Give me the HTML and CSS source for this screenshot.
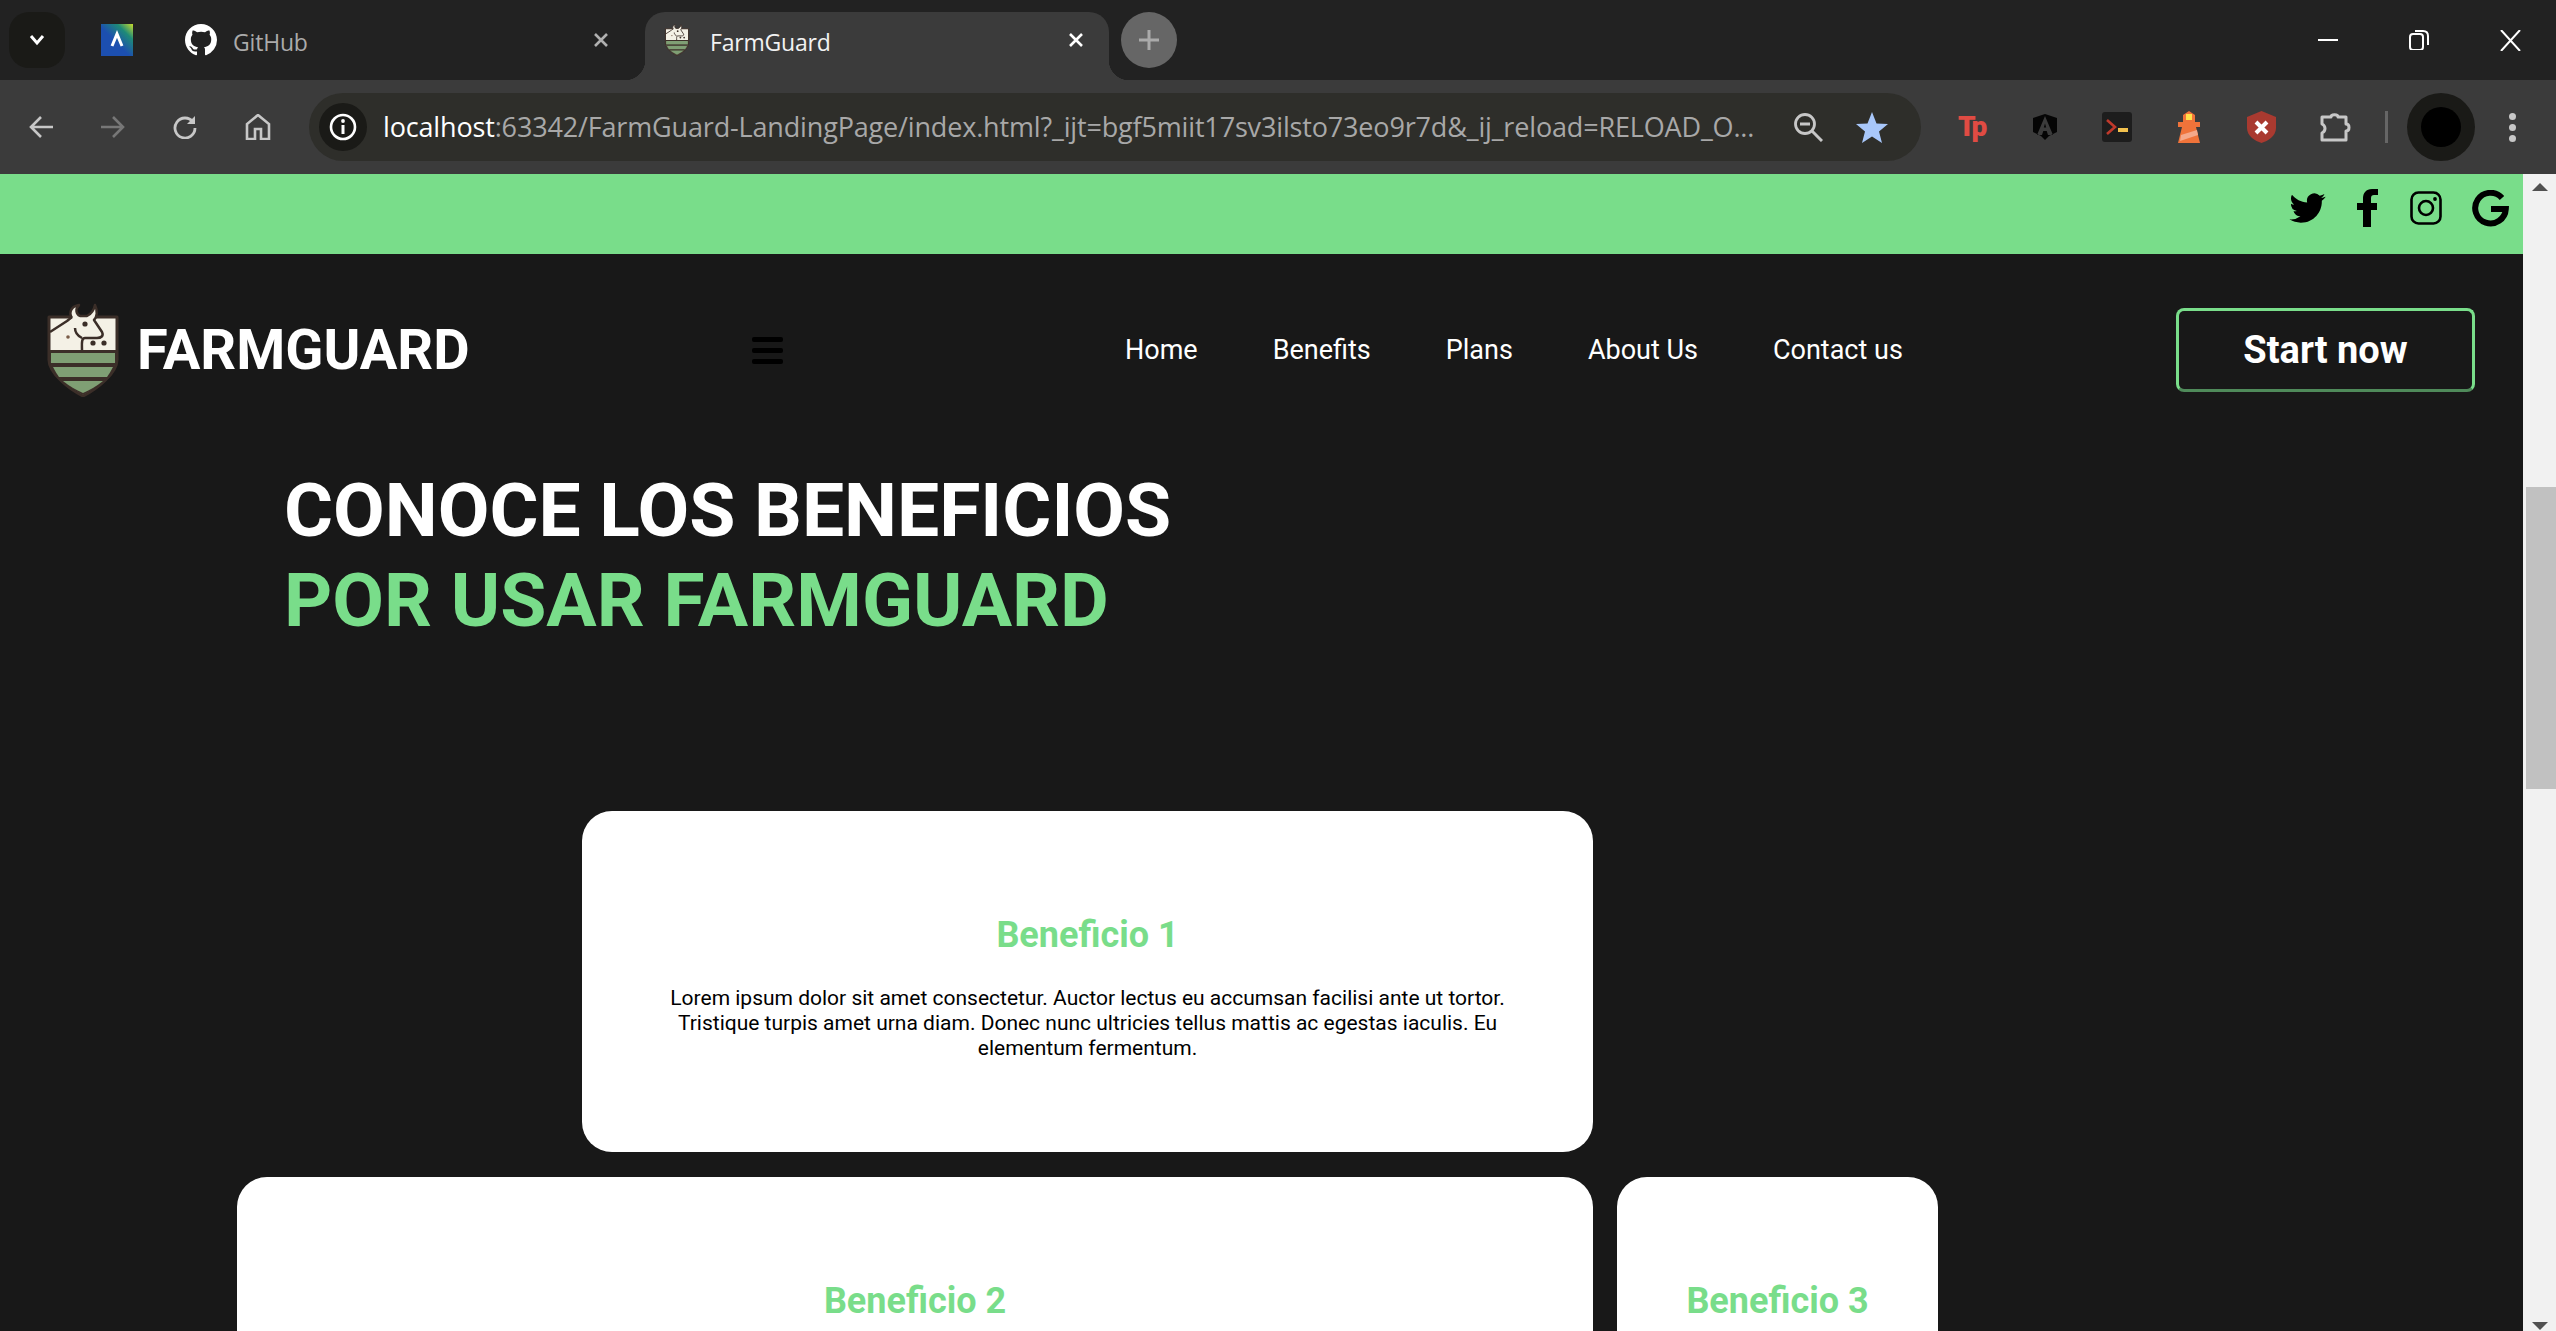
FILE: index.html
```html
<!DOCTYPE html>
<html lang="en">
<head>
  <meta charset="UTF-8" />
  <title>FarmGuard</title>
  <link rel="stylesheet" href="styles.css">
</head>
<body>
  <svg class="defs" width="0" height="0">
    <symbol id="farm-logo" viewBox="0 0 72 94">
      <path d="M2 14H70V57C70 70 50 86 36 93C22 86 2 70 2 57Z" fill="#f4f1e6" stroke="#3b2e28" stroke-width="3" stroke-linejoin="round"/>
      <path d="M3 47H69V57C69 70 50 85 36 92C22 85 3 70 3 57Z" fill="#3b2e28"/>
      <path d="M4 50H68V60H4Z" fill="#7f9f74"/>
      <path d="M6 64H66C64 68 62 71 60 74H12C10 71 8 68 6 64Z" fill="#7f9f74"/>
      <path d="M16 78H56C50 83 43 87 36 90C29 87 22 83 16 78Z" fill="#7f9f74"/>
      <path d="M25 15C21 9 25 3 32 2C28 6 29 11 33 13H40C44 11 47 7 48 2C51 8 50 14 47 17L55 29C57 33 54 35 50 35H40C36 35 35 38 35 47H28V36C24 30 25 24 25 15Z" fill="#f4f1e6"/>
      <path d="M25 15C21 9 25 3 32 2C28 6 29 11 33 13H40C44 11 47 7 48 2C51 8 50 14 47 17L55 29C57 33 54 35 50 35H38C34 35 35 42 35 47M3 29L20 18L25 14M28 25C28 30 31 33 35 35" fill="none" stroke="#3b2e28" stroke-width="2.5" stroke-linejoin="round"/>
      <circle cx="38" cy="21" r="2.6" fill="#3b2e28"/>
      <circle cx="21" cy="34" r="1.8" fill="#7a5c48"/>
      <circle cx="46" cy="40" r="2.6" fill="#3b2e28"/>
      <circle cx="57" cy="40" r="2.6" fill="#3b2e28"/>
    </symbol>
  </svg>

  <div class="tabstrip">
    <button class="tab-search">
      <svg width="18" height="12" viewBox="0 0 18 12"><path d="M3 2L9 9L15 2" fill="none" stroke="#fff" stroke-width="3"/></svg>
    </button>
    <div class="pinned-icon">
      <svg width="32" height="32" viewBox="0 0 32 32">
        <defs>
          <linearGradient id="pin-grad" x1="0" y1="1" x2="1" y2="0">
            <stop offset="0.45" stop-color="#1c4fb0"/>
            <stop offset="0.75" stop-color="#1e8a78"/>
            <stop offset="1" stop-color="#c8dc2c"/>
          </linearGradient>
        </defs>
        <rect width="32" height="32" fill="url(#pin-grad)"/>
        <path d="M11 22L16 10L21 22" fill="none" stroke="#fff" stroke-width="3"/>
      </svg>
    </div>
    <div class="tab">
      <svg class="tab-icon" width="32" height="32" viewBox="0 0 16 16"><path fill="#fff" d="M8 0C3.58 0 0 3.58 0 8c0 3.54 2.29 6.53 5.47 7.59.4.07.55-.17.55-.38 0-.19-.01-.82-.01-1.49-2.01.37-2.53-.49-2.69-.94-.09-.23-.48-.94-.82-1.13-.28-.15-.68-.52-.01-.53.63-.01 1.08.58 1.23.82.72 1.21 1.87.87 2.33.66.07-.52.28-.87.51-1.07-1.78-.2-3.64-.89-3.64-3.95 0-.87.31-1.59.82-2.15-.08-.2-.36-1.02.08-2.12 0 0 .67-.21 2.2.82.64-.18 1.32-.27 2-.27.68 0 1.36.09 2 .27 1.53-1.04 2.2-.82 2.2-.82.44 1.1.16 1.92.08 2.12.51.56.82 1.27.82 2.15 0 3.07-1.87 3.75-3.65 3.95.29.25.54.73.54 1.48 0 1.07-.01 1.93-.01 2.2 0 .21.15.46.55.38A8.013 8.013 0 0016 8c0-4.42-3.58-8-8-8z"/></svg>
      <span class="tab-title">GitHub</span>
      <svg class="tab-close" width="16" height="16" viewBox="0 0 16 16"><path d="M2 2L14 14M14 2L2 14" stroke="#b0b0b0" stroke-width="2.6"/></svg>
    </div>
    <div class="tab tab-active">
      <svg class="tab-icon" width="30" height="32"><use href="#farm-logo"/></svg>
      <span class="tab-title">FarmGuard</span>
      <svg class="tab-close" width="16" height="16" viewBox="0 0 16 16"><path d="M2 2L14 14M14 2L2 14" stroke="#fff" stroke-width="2.6"/></svg>
    </div>
    <button class="new-tab">
      <svg width="22" height="22" viewBox="0 0 22 22"><path d="M11 1V21M1 11H21" stroke="#aaa" stroke-width="3"/></svg>
    </button>
    <div class="window-btns">
      <svg width="20" height="20" viewBox="0 0 20 20"><path d="M0 10H20" stroke="#fff" stroke-width="2"/></svg>
      <svg width="20" height="20" viewBox="0 0 20 20"><rect x="1" y="4" width="13" height="16" rx="3" fill="none" stroke="#fff" stroke-width="2"/><path d="M6 1H14C17 1 19 3 19 6V15" fill="none" stroke="#fff" stroke-width="2"/></svg>
      <svg width="21" height="21" viewBox="0 0 21 21"><path d="M1 0L20 21M20 0L1 21" stroke="#fff" stroke-width="2"/></svg>
    </div>
  </div>

  <div class="toolbar">
    <div class="nav-btns">
      <svg width="24" height="24" viewBox="0 0 24 24"><path d="M24 12H3M12 2L2 12L12 22" fill="none" stroke="#c7c7c7" stroke-width="2.6"/></svg>
      <svg width="24" height="24" viewBox="0 0 24 24"><path d="M0 12H21M12 2L22 12L12 22" fill="none" stroke="#777" stroke-width="2.6"/></svg>
      <svg width="24" height="24" viewBox="0 0 24 24"><path d="M20 7A10 10 0 1 0 22 13" fill="none" stroke="#c7c7c7" stroke-width="2.8"/><path d="M22 1V9H14Z" fill="#c7c7c7"/></svg>
      <svg width="26" height="26" viewBox="0 0 26 26"><path d="M2 25V10L13 1L24 10V25H16V15H10V25Z" fill="none" stroke="#c7c7c7" stroke-width="2.6"/></svg>
    </div>
    <div class="omnibox">
      <div class="site-info">
        <svg width="28" height="28" viewBox="0 0 28 28"><circle cx="14" cy="14" r="12" fill="none" stroke="#fff" stroke-width="2.6"/><path d="M14 12V21" stroke="#fff" stroke-width="3"/><circle cx="14" cy="8" r="1.9" fill="#fff"/></svg>
      </div>
      <div class="url"><span class="url-host">localhost</span>:63342/FarmGuard-LandingPage/index.html?_ijt=bgf5miit17sv3ilsto73eo9r7d&amp;_ij_reload=RELOAD_O...</div>
      <svg class="omni-zoom" width="30" height="30" viewBox="0 0 30 30"><circle cx="12" cy="12" r="9.5" fill="none" stroke="#c7c7c7" stroke-width="2.8"/><path d="M7 12H17" stroke="#c7c7c7" stroke-width="3"/><path d="M19 19L29 29" stroke="#c7c7c7" stroke-width="3"/></svg>
      <svg class="omni-star" width="32" height="31" viewBox="0 0 32 31"><path d="M16 0L20.5 11.5L32 12L23 19.5L26 31L16 24.5L6 31L9 19.5L0 12L11.5 11.5Z" fill="#a8c7fa"/></svg>
    </div>
    <div class="extensions">
      <span class="ext-tp">Tp</span>
      <svg class="ext" width="24" height="26" viewBox="0 0 24 26"><path fill-rule="evenodd" d="M12 0L24 4V18L16 22L12 26L8 22L0 18V4ZM12 2L4 21H9L10.3 17H13.7L15 21H20ZM12 9.5L13.2 13.5H10.8Z" fill="#050505"/></svg>
      <svg class="ext" width="30" height="30" viewBox="0 0 30 30"><rect width="30" height="30" rx="3" fill="#1d1d1d"/><path d="M5 8L13 15L5 22" fill="none" stroke="#c0392b" stroke-width="2.6"/><rect x="16" y="16" width="10" height="4" fill="#f2c14e"/></svg>
      <svg class="ext ext-lighthouse" width="22" height="32" viewBox="0 0 22 32"><path d="M11 0L17 4V11H5V4Z" fill="#f0733a"/><rect x="8" y="3" width="6" height="6" fill="#ffe14a"/><rect y="11" width="22" height="5" fill="#f0733a"/><path d="M4 16H18L22 32H0Z" fill="#f0733a"/><path d="M3 24L19 19L20 24L2 30Z" fill="#f5a98a"/></svg>
      <svg class="ext ext-shield" width="29" height="32" viewBox="0 0 29 32"><path d="M14.5 0L29 6V17C29 25 21 30 14.5 32C8 30 0 25 0 17V6Z" fill="#a93a30"/><path d="M9 11L20 22M20 11L9 22" stroke="#fff" stroke-width="4"/></svg>
      <svg class="ext ext-puzzle" width="32" height="32" viewBox="0 0 32 32"><path d="M3 6H12C12 3 19 3 19 6H27V13C31 13 31 20 27 20V29H3V22C7 20 7 15 3 13Z" fill="none" stroke="#c7c7c7" stroke-width="3" stroke-linejoin="round"/></svg>
    </div>
    <div class="toolbar-divider"></div>
    <div class="avatar-btn"><div class="avatar"></div></div>
    <div class="menu-dots"><span></span><span></span><span></span></div>
  </div>

  <div class="viewport">
    <div class="page">
      <div class="topbar">
        <svg class="social" width="37" height="30" viewBox="0 0 24 20"><path d="M23.953 2.57a10 10 0 01-2.825.775 4.958 4.958 0 002.163-2.723c-.951.555-2.005.959-3.127 1.184a4.92 4.92 0 00-8.384 4.482C7.69 6.095 4.067 4.13 1.64 1.162a4.822 4.822 0 00-.666 2.475c0 1.71.87 3.213 2.188 4.096a4.904 4.904 0 01-2.228-.616v.06a4.923 4.923 0 003.946 4.827 4.996 4.996 0 01-2.212.085 4.936 4.936 0 004.604 3.417 9.867 9.867 0 01-6.102 2.105c-.39 0-.779-.023-1.17-.067a13.995 13.995 0 007.557 2.209c9.053 0 13.998-7.496 13.998-13.985 0-.21 0-.42-.015-.63A9.935 9.935 0 0024 2.59z"/></svg>
        <svg class="social" width="21" height="38" viewBox="0 0 21 38"><path d="M14 38V21H20V14H14V9C14 7 15 6 17 6H21V0H15C9 0 6 4 6 9V14H0V21H6V38Z"/></svg>
        <svg class="social social-insta" width="32" height="34" viewBox="0 0 32 34"><rect x="1.5" y="1.5" width="29" height="31" rx="7" fill="none" stroke="#000" stroke-width="2.6"/><circle cx="16" cy="17" r="7" fill="none" stroke="#000" stroke-width="2.6"/><circle cx="25" cy="8" r="1.9"/></svg>
        <svg class="social" width="37" height="37" viewBox="0 0 37 37"><path d="M30 8A15.3 15.3 0 1 0 33.8 19H19" fill="none" stroke="#000" stroke-width="6"/></svg>
      </div>

      <header class="navbar">
        <div class="brand">
          <svg class="brand-logo" width="72" height="94"><use href="#farm-logo"/></svg>
          <span class="brand-name">FARMGUARD</span>
        </div>
        <div class="hamburger"><span></span><span></span><span></span></div>
        <nav class="menu">
          <a href="#">Home</a>
          <a href="#">Benefits</a>
          <a href="#">Plans</a>
          <a href="#">About Us</a>
          <a href="#">Contact us</a>
        </nav>
        <a class="start-btn" href="#">Start now</a>
      </header>

      <section class="benefits">
        <h1 class="benefits-title">CONOCE LOS BENEFICIOS<br><span class="green">POR USAR FARMGUARD</span></h1>
        <div class="cards">
          <div class="card card-1">
            <h2>Beneficio 1</h2>
            <p>Lorem ipsum dolor sit amet consectetur. Auctor lectus eu accumsan facilisi ante ut tortor. Tristique turpis amet urna diam. Donec nunc ultricies tellus mattis ac egestas iaculis. Eu elementum fermentum.</p>
          </div>
          <div class="card card-2">
            <h2>Beneficio 2</h2>
          </div>
          <div class="card card-3">
            <h2>Beneficio 3</h2>
          </div>
        </div>
      </section>
    </div>

    <div class="scrollbar">
      <div class="arrow-up"></div>
      <div class="thumb"></div>
      <div class="arrow-down"></div>
    </div>
  </div>
</body>
</html>
```

FILE: styles.css
```css
* {
  box-sizing: border-box;
}

html, body {
  height: 100%;
}

body {
  margin: 0;
  display: flex;
  flex-direction: column;
  overflow: hidden;
  font-family: 'Roboto', sans-serif;
  background: #181818;
}

.defs {
  position: absolute;
}

button {
  border: none;
  padding: 0;
  display: flex;
  align-items: center;
  justify-content: center;
}

/* browser chrome */
.tabstrip {
  height: 80px;
  flex: none;
  display: flex;
  background: #222222;
  padding: 12px 0 0 9px;
  font-family: 'Open Sans', sans-serif;
}

.tab-search {
  width: 56px;
  height: 56px;
  border-radius: 20px;
  background: #1a1a17;
}

.pinned-icon {
  margin: 12px 0 0 36px;
  width: 32px;
  height: 32px;
}

.tab {
  width: 464px;
  height: 68px;
  display: flex;
  align-items: flex-start;
  padding-top: 12px;
  position: relative;
}

.tab:not(.tab-active) {
  margin-left: 52px;
  width: 460px;
}

.tab-icon {
  flex: none;
}

.tab-title {
  font-size: 23px;
  line-height: 36px;
  margin-left: 16px;
  color: #ababab;
  letter-spacing: -0.2px;
}

.tab-close {
  position: absolute;
  top: 20px;
  left: 408px;
}

.tab-active {
  background: #3b3b3b;
  border-radius: 20px 20px 0 0;
  padding-left: 17px;
}

.tab-active .tab-title {
  margin-left: 18px;
  color: #f2f2f2;
}

.tab-active .tab-close {
  left: 423px;
}

.tab-active::before,
.tab-active::after {
  content: '';
  position: absolute;
  bottom: 0;
  width: 20px;
  height: 20px;
}

.tab-active::before {
  left: -20px;
  background: radial-gradient(circle at 0 0, #222222 20px, #3b3b3b 20.5px);
}

.tab-active::after {
  right: -20px;
  background: radial-gradient(circle at 100% 0, #222222 20px, #3b3b3b 20.5px);
}

.new-tab {
  width: 56px;
  height: 56px;
  border-radius: 50%;
  background: #666666;
  margin-left: 12px;
}

.window-btns {
  margin-left: auto;
  display: flex;
  align-items: flex-start;
  gap: 71px;
  padding: 18px 35px 0 0;
}

.toolbar {
  height: 94px;
  flex: none;
  display: flex;
  align-items: center;
  background: #3b3b3b;
  padding: 0 0 0 29px;
  font-family: 'Open Sans', sans-serif;
}

.nav-btns {
  display: flex;
  align-items: center;
  gap: 48px;
  width: 280px;
}

.omnibox {
  width: 1612px;
  height: 68px;
  border-radius: 34px;
  background: #2e2e2a;
  display: flex;
  align-items: center;
  padding-left: 10px;
}

.site-info {
  width: 48px;
  height: 48px;
  border-radius: 50%;
  background: #1a1a17;
  display: flex;
  align-items: center;
  justify-content: center;
  flex: none;
}

.url {
  margin: -2px 0 0 16px;
  width: 1385px;
  flex: none;
  font-size: 27px;
  letter-spacing: -0.16px;
  white-space: nowrap;
  color: #a8a8a8;
}

.url-host {
  color: #ffffff;
}

.omni-zoom {
  margin-left: 25px;
  flex: none;
}

.omni-star {
  margin-left: 33px;
  flex: none;
}

.extensions {
  display: flex;
  align-items: center;
  margin-left: 37px;
  width: 393px;
  gap: 45px;
}

.ext {
  flex: none;
}

.ext-tp {
  width: 30px;
  flex: none;
  font-family: 'Roboto', sans-serif;
  font-weight: 900;
  font-size: 28px;
  line-height: 34px;
  letter-spacing: -3px;
  color: #e04b43;
}

.ext-lighthouse {
  margin-left: 1px;
}

.ext-shield {
  margin-left: 2px;
}

.ext-puzzle {
  margin-left: -2px;
}

.toolbar-divider {
  width: 3px;
  height: 32px;
  background: #666666;
  margin-left: 34px;
}

.avatar-btn {
  width: 68px;
  height: 68px;
  border-radius: 50%;
  background: #1a1a17;
  margin-left: 19px;
  display: flex;
  align-items: center;
  justify-content: center;
}

.avatar {
  width: 40px;
  height: 40px;
  border-radius: 50%;
  background: #000000;
}

.menu-dots {
  display: flex;
  flex-direction: column;
  gap: 4px;
  margin-left: 34px;
}

.menu-dots span {
  width: 7px;
  height: 7px;
  border-radius: 50%;
  background: #c7c7c7;
}

/* page */
.viewport {
  flex: 1;
  min-height: 0;
  display: flex;
}

.page {
  flex: 1;
  min-width: 0;
  overflow: hidden;
  background: #181818;
}

.topbar {
  height: 80px;
  background: #79dd8a;
  display: flex;
  justify-content: flex-end;
  align-items: center;
  gap: 31px;
  padding: 15px 14px 27px 0;
}

.social-insta {
  margin: 0 -1px 0 1px;
}

.navbar {
  height: 192px;
  display: flex;
  align-items: center;
  padding-left: 47px;
}

.brand {
  width: 705px;
  display: flex;
  align-items: center;
  gap: 18px;
}

.brand-name {
  font-size: 56px;
  font-weight: 700;
  color: #ffffff;
}

.hamburger {
  width: 31px;
  display: flex;
  flex-direction: column;
  gap: 6px;
}

.hamburger span {
  height: 5px;
  border-radius: 2px;
  background: #000000;
}

.menu {
  margin-left: 342px;
  display: flex;
  gap: 75px;
}

.menu a {
  font-size: 27px;
  color: #ffffff;
  text-decoration: none;
}

.start-btn {
  margin-left: auto;
  margin-right: 48px;
  width: 299px;
  height: 84px;
  display: flex;
  align-items: center;
  justify-content: center;
  border: 3px solid #79dd8a;
  border-bottom-color: #4f8a5a;
  border-radius: 8px;
  font-size: 38px;
  font-weight: 700;
  color: #ffffff;
  text-decoration: none;
}

.benefits {
  padding: 19px 0 0 237px;
}

.benefits-title {
  margin: 0 0 166px 47px;
  font-size: 75px;
  line-height: 90px;
  font-weight: 700;
  color: #ffffff;
}

.green {
  color: #79dd8a;
}

.cards {
  display: grid;
  grid-template-columns: 321px 1011px 321px;
  grid-auto-rows: 341px;
  gap: 25px 24px;
}

.card {
  background: #ffffff;
  border-radius: 30px;
  padding: 103px 80px 0;
  text-align: center;
}

.card-1 {
  grid-column: 2;
}

.card-2 {
  grid-column: 1 / span 2;
}

.card-3 {
  padding-left: 20px;
  padding-right: 20px;
}

.card h2 {
  margin: 0 0 30px;
  font-size: 36px;
  line-height: 42px;
  font-weight: 700;
  color: #79dd8a;
}

.card p {
  margin: 0;
  font-size: 21px;
  line-height: 25px;
  color: #000000;
}

/* scrollbar */
.scrollbar {
  width: 33px;
  flex: none;
  background: #f1f1f1;
  display: flex;
  flex-direction: column;
  align-items: center;
  padding-top: 9px;
}

.arrow-up {
  width: 0;
  height: 0;
  border-left: 8px solid transparent;
  border-right: 8px solid transparent;
  border-bottom: 8px solid #505050;
}

.arrow-down {
  width: 0;
  height: 0;
  margin-top: auto;
  margin-bottom: 1px;
  border-left: 8px solid transparent;
  border-right: 8px solid transparent;
  border-top: 8px solid #505050;
}

.thumb {
  width: 30px;
  height: 302px;
  margin: 296px 0 0 2px;
  background: #c1c1c1;
}
```
